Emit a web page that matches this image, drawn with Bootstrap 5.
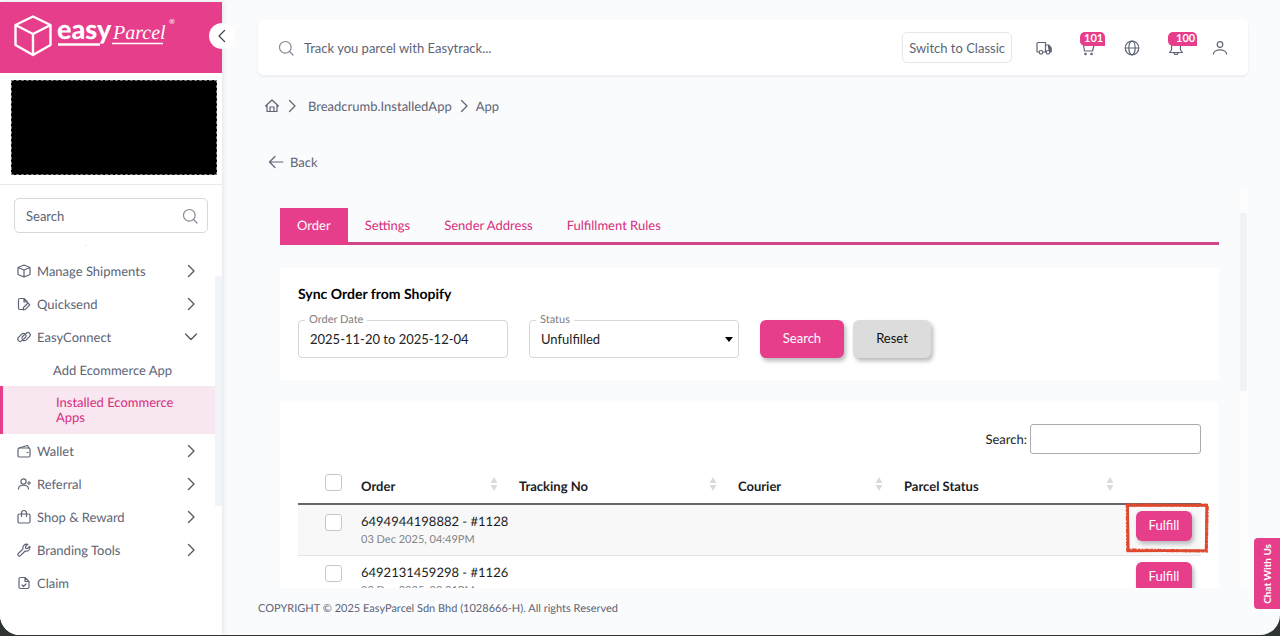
<!DOCTYPE html>
<html lang="en">
<head>
<meta charset="utf-8">
<meta name="viewport" content="width=device-width, initial-scale=1">
<title>EasyParcel - Installed Ecommerce Apps</title>
<link href="https://cdn.jsdelivr.net/npm/bootstrap@5.3.0/dist/css/bootstrap.min.css" rel="stylesheet">
<style>
:root{--pink:#e63e8b;--ink:#5d6475;--line:#d9dbdf}
body{font-family:Lato,"Liberation Sans",sans-serif;font-size:13px;line-height:16px;color:var(--ink);background:#2f3332;height:100vh;overflow:hidden;text-rendering:geometricPrecision}
a{color:inherit;text-decoration:none}
svg{display:block;flex:none}
.ico{width:16px;height:16px;fill:none;stroke:currentColor;stroke-width:1.2;stroke-linecap:round;stroke-linejoin:round}
.app-shell{height:calc(100vh - 1px);background:#fafbfd;border-radius:0 0 20px 20px;overflow:hidden;padding-top:2px}
.side{width:222px;background:#fff;box-shadow:1px 0 5px #dfe3e8;z-index:2}
.brand{background:var(--pink);height:71px;padding:12px 14px}
.collapse-btn{right:-13px;top:21px;width:26px;height:26px;background:#fff;color:#444;border:0;padding:0}
.account{height:95px;margin:7px 5px 9px 11px;background:#000;border:1px dashed #777}
.side-search{border-top:1px solid #e8eaec;padding:13px 14px 12px}
.field-box{height:35px;border:1px solid #d5d8dc;border-radius:5px;padding:0 9px 0 11px}
.bare{border:0;background:none;outline:0;padding:0;min-width:0;color:inherit}
.bare::placeholder{color:var(--ink);opacity:1}
.lens{color:#858b96}
.side-nav{overflow:hidden;margin-bottom:22px}
.side-list{margin-top:-24px;width:215px}
.side-list a{display:flex;align-items:center;height:33px;padding:0 16px 0 16px}
.side-list a .ico:first-child{margin-right:5px}
.side-list .chev{margin-left:auto;stroke-width:1.4;color:#555b66}
.side-list .sub{padding-left:53px}
.side-list .on{height:48px;line-height:15px;padding:0 30px 0 53px;border-left:3px solid var(--pink);background:#f8e6f1;color:#d62f7d}
.thumb{width:7px;background:#f0f4f7}
.side .thumb{right:0;top:274px;height:230px}
.topbar{height:55px;margin:18px 32px 0 36px;padding:0 20px;background:#fff;border-radius:5px;box-shadow:0 2px 3px #eaecef}
.topbar .lens{margin-right:10px}
.classic{border:1px solid #e4e6ea;border-radius:5px;height:31px;background:#fff;color:inherit;padding:0 6px}
.tool{width:16px;height:16px;margin-left:28px;color:inherit}
.count{bottom:10px;height:14px;background:var(--pink);color:#fff;font-weight:700;font-size:11px;line-height:14px;border-radius:5px 5px 0 5px;padding:0 2px 0 4px}
.crumbs{margin:23px 0 0 42px;height:16px}
.back{margin:40px 0 0 46px;height:16px;gap:6px}
.scroller{margin:18px 32px 0 58px;overflow:hidden}
.content-col{padding-top:20px}
.rail{width:8px;margin-left:21px;background:#fdfdfe}
.rail .thumb{margin-top:25px;height:178px}
.tabs{border-bottom:3px solid #cf4788;color:#d62f7d}
.tabs a{height:34px;line-height:34px;padding:0 17px}
.tabs .current{background:var(--pink);color:#fff;border-bottom:3px solid var(--pink);height:37px;margin-bottom:-3px}
.panel{background:#fff;padding:17px 18px 0;color:#1c1d20}
.filters{margin-top:23px;height:112px}
.filters h1{font-size:14px;line-height:18px;font-weight:700;color:#000;margin:0 0 17px}
.outlined{width:210px;margin-right:21px}
.outlined label{left:7px;top:-8px;padding:0 4px;font-size:11px;background:#fff;color:#7d8083}
.outlined .ctl{width:100%;height:38px;border:1px solid #d4d6d8;border-radius:4px;padding:0 11px;font-size:13px;color:#222;background-color:#fff}
.outlined select.ctl{padding-top:2px;background-position:right 5px center;background-size:8px 5px;--bs-form-select-bg-img:url("data:image/svg+xml,%3Csvg xmlns='http://www.w3.org/2000/svg' viewBox='0 0 8 5'%3E%3Cpath d='M0 0h8L4 5z'/%3E%3C/svg%3E")}
.act{border:0;border-radius:6px;color:#fff;background:var(--pink);box-shadow:2px 3px 4px #b9b9bd;padding:0 0 2px}
.wide{width:84px;height:38px;margin-right:9px}
.grey{background:#dcdcdc;color:#111;width:78px}
.orders{margin-top:22px;padding-top:22px}
.orders .find{height:30px;width:171px;border:1px solid #a9abad;border-radius:3px;margin-left:3px}
.grid{width:100%;table-layout:fixed;margin-top:12px;color:#1b1c1e}
.grid th{height:38px;font-weight:700;padding:2px 10px 0;border-bottom:2px solid #666}
.grid td{height:51px;vertical-align:top;padding:8px 10px 0;border-bottom:1px solid #e3e3e3;white-space:nowrap}
.grid th:first-child,.grid td:first-child{padding-left:27px}
.grid th:first-child{padding-top:0;padding-bottom:4px}
.grid td:last-child{padding:6px 0 0 11px}
.grid tbody tr:nth-child(odd){background:#f8f8f8}
.c1{width:53px}.c2{width:158px}.c4{width:166px}.c5{width:231px}.c6{width:76px}
.grid input{width:17px;height:17px;margin:0;border:1px solid #c4c6c9;border-radius:3px;display:block;background-color:#fff}
.grid td input{margin-top:1px}
.grid small{display:block;font-size:11px;line-height:15px;margin-top:3px;color:#828487}
.sorter{width:8px;height:16px;fill:#d9dadc;margin:-2px 1px 0 0}
.ship{width:56px;height:30px}
.outline-mark{left:-1px;top:-3px;width:86px;height:52px;pointer-events:none;fill:none}
.foot{height:47px;padding:13px 0 0 36px;font-size:11px}
.chat{right:0;bottom:26px;width:26px;height:71px;border:0;border-radius:4px 0 0 4px;background:var(--pink);color:#fff;font-size:10px;font-weight:700;z-index:3}
.chat span{writing-mode:vertical-rl;transform:rotate(180deg);white-space:nowrap}
</style>
</head>
<body>
<svg width="0" height="0" class="position-absolute">
<symbol id="right" viewBox="0 0 16 16"><path d="m5.500 2.500 5.500 5.500-5.500 5.500"/></symbol>
<symbol id="find" viewBox="0 0 16 16"><circle cx="7.300" cy="7.300" r="5.800"/><path d="m11.500 11.500 3.500 3.500"/></symbol>
</svg>
<div class="app-shell d-flex position-relative">
<aside class="side d-flex flex-column flex-shrink-0 position-relative">
  <div class="brand">
    <svg width="164" height="46" viewBox="0 0 164 46" role="img" aria-label="easyParcel" fill="none" stroke="#fff">
      <path d="M19 2.500 36.500 11v20L19 41 1.500 31V11zM1.500 11 19 20l17.500-9M19 20v21" stroke-width="2.400" stroke-linejoin="round"/>
      <text x="43" y="25" font-family="Lato" font-weight="900" font-size="27" fill="#fff" stroke="none">easy</text>
      <text x="99" y="25" font-family="Liberation Serif" font-style="italic" font-size="20" fill="#fff" stroke="none">Parcel</text>
      <text x="155" y="10" font-family="Lato" font-size="7" fill="#fff" stroke="none">®</text>
      <path d="M44 30.500h42" stroke-width="2.500"/><path d="M98 29.500h51" stroke-width="1.500"/>
    </svg>
  </div>
  <button class="collapse-btn rounded-circle position-absolute d-flex align-items-center justify-content-center" aria-label="Collapse menu"><svg class="ico" viewBox="0 0 16 16"><path d="M10.500 2.500 5 8l5.500 5.500"/></svg></button>
  <div class="account"></div>
  <div class="side-search"><div class="field-box d-flex align-items-center"><input class="bare flex-grow-1" aria-label="Search menu" placeholder="Search"><svg class="ico lens"><use href="#find"/></svg></div></div>
  <nav class="side-nav flex-grow-1">
    <div class="side-list">
      <a href="#"><svg class="ico" viewBox="0 0 16 16"><path d="M3 2h10v9.500H3z"/></svg>New Shipment<svg class="ico chev"><use href="#right"/></svg></a>
      <a href="#"><svg class="ico" viewBox="0 0 16 16"><path d="m8 2 6 2.500v7L8 14l-6-2.500v-7zM2 4.500 8 7l6-2.500M8 7v7"/></svg>Manage Shipments<svg class="ico chev"><use href="#right"/></svg></a>
      <a href="#"><svg class="ico" viewBox="0 0 16 16"><path d="M6 13.500H4a1.500 1.500 0 0 1-1.500-1.500V4A1.500 1.500 0 0 1 4 2.500h4l3.500 3.500M8 2.500V6h3.500M7.500 11.500 12 7l1.800 1.800-4.500 4.500-2.300.500z"/></svg>Quicksend<svg class="ico chev"><use href="#right"/></svg></a>
      <a href="#"><svg class="ico" viewBox="0 0 16 16"><path d="M6.500 11 5.800 11.700a2.300 2.300 0 0 1-3.300-3.300l3.500-3.500a2.500 2.500 0 0 1 3.600 3.400L7.800 10M9.500 5l.7-.7a2.300 2.300 0 0 1 3.300 3.300L10 11.100a2.500 2.500 0 0 1-3.600-3.400L8.200 6"/></svg>EasyConnect<svg class="ico chev" viewBox="0 0 16 16"><path d="m2.500 5 5.500 5.500L13.500 5"/></svg></a>
      <a href="#" class="sub">Add Ecommerce App</a>
      <a href="#" class="on">Installed Ecommerce Apps</a>
      <a href="#"><svg class="ico" viewBox="0 0 16 16"><rect x="2" y="5" width="12" height="9" rx="1.500"/><path d="M3 5 11.500 2.500 13 5M11 9.500h1"/></svg>Wallet<svg class="ico chev"><use href="#right"/></svg></a>
      <a href="#"><svg class="ico" viewBox="0 0 16 16"><circle cx="7.500" cy="5.500" r="2.600"/><path d="M2.500 13c0-5 10-5 10 0M13 5.500v3M11.500 7h3"/></svg>Referral<svg class="ico chev"><use href="#right"/></svg></a>
      <a href="#"><svg class="ico" viewBox="0 0 16 16"><rect x="2" y="5" width="12" height="9" rx="1.500"/><path d="M5.500 7.500V4a2.500 2.500 0 0 1 5 0v3.500"/></svg>Shop &amp; Reward<svg class="ico chev"><use href="#right"/></svg></a>
      <a href="#"><svg class="ico" viewBox="0 0 16 16"><path d="M11.800 2.300a3.700 3.700 0 0 0-4.800 4.500L2.300 11.500a1.500 1.500 0 0 0 2.200 2.200L9.200 9a3.700 3.700 0 0 0 4.600-4.700L11.500 6.500 9.800 6.300 9.500 4.500z"/></svg>Branding Tools<svg class="ico chev"><use href="#right"/></svg></a>
      <a href="#"><svg class="ico" viewBox="0 0 16 16"><path d="M4.500 2.500h4.500l4 4V12a1.500 1.500 0 0 1-1.500 1.500h-7A1.500 1.500 0 0 1 3 12V4a1.500 1.500 0 0 1 1.500-1.500zM9 2.500v4h4M6 10l1.500 1.500L10 9"/></svg>Claim</a>
    </div>
  </nav>
  <div class="thumb position-absolute"></div>
</aside>
<main class="flex-grow-1 d-flex flex-column" style="min-width:0">
  <header class="topbar d-flex align-items-center flex-shrink-0">
    <svg class="ico lens"><use href="#find"/></svg>
    <input class="bare flex-grow-1" aria-label="Track parcel" placeholder="Track you parcel with Easytrack...">
    <button class="classic">Switch to Classic</button>
    <a href="#" class="tool ms-4" aria-label="Shipments"><svg class="ico" viewBox="0 0 16 16"><path d="M3 12H1.500a.500.500 0 0 1-.5-.5V3.500c0-.5.500-1 1-1h7.500V12H7M10 5h3l2 3v4h-1.500"/><path d="M12.500 5.500 15 8v3.500h-2V8h-.5z" fill="currentColor"/><circle cx="5" cy="12.300" r="1.800" fill="#fff"/><circle cx="12" cy="12.300" r="1.800" fill="#fff"/></svg></a>
    <a href="#" class="tool position-relative" aria-label="Cart"><svg class="ico" viewBox="0 0 16 16"><path d="M1 2.500h2l1.500 8.500h8L14 5H3.500"/><circle cx="5.500" cy="14" r=".7" fill="currentColor"/><circle cx="11.500" cy="14" r=".7" fill="currentColor"/></svg><span class="count position-absolute start-0">101</span></a>
    <a href="#" class="tool" aria-label="Language"><svg class="ico" viewBox="0 0 16 16"><circle cx="8" cy="8" r="6.800"/><ellipse cx="8" cy="8" rx="3.200" ry="6.800"/><path d="M1.500 8h13"/></svg></a>
    <a href="#" class="tool position-relative" aria-label="Notifications"><svg class="ico" viewBox="0 0 16 16"><path d="M3.500 10V6.500a4.500 4.500 0 0 1 9 0V10l2 2.500h-13zM6 12.500a2 2 0 0 0 4 0"/></svg><span class="count position-absolute start-0 ps-2">100</span></a>
    <a href="#" class="tool" aria-label="Profile"><svg class="ico" viewBox="0 0 16 16"><circle cx="8" cy="4.500" r="2.800"/><path d="M1.500 14c0-5.500 13-5.500 13 0"/></svg></a>
  </header>
  <nav class="crumbs d-flex align-items-center flex-shrink-0" aria-label="Breadcrumb">
    <a href="#" aria-label="Home"><svg class="ico" viewBox="0 0 16 16"><path d="m1.500 8 6.500-6 6.500 6M3 7v6.500h10V7M6 13.500V9h4v4.500"/></svg></a>
    <svg class="ico ms-1"><use href="#right"/></svg><a href="#" class="ms-2 me-1">Breadcrumb.InstalledApp</a>
    <svg class="ico"><use href="#right"/></svg><span class="ms-1">App</span>
  </nav>
  <a href="#" class="back d-flex align-items-center flex-shrink-0 align-self-start"><svg class="ico" viewBox="0 0 16 16"><path d="M7 2.500 1.500 8 7 13.500M1.500 8h13.500"/></svg><span>Back</span></a>
  <div class="scroller d-flex flex-grow-1">
    <div class="content-col flex-grow-1">
      <nav class="tabs d-flex"><a href="#" class="current" aria-current="page">Order</a><a href="#">Settings</a><a href="#">Sender Address</a><a href="#">Fulfillment Rules</a></nav>
      <section class="panel filters">
        <h1>Sync Order from Shopify</h1>
        <form class="d-flex">
          <div class="outlined position-relative"><label for="range" class="position-absolute">Order Date</label><input id="range" class="ctl" value="2025-11-20 to 2025-12-04"></div>
          <div class="outlined position-relative"><label for="state" class="position-absolute">Status</label><select id="state" class="ctl form-select shadow-none"><option>Unfulfilled</option></select></div>
          <button type="button" class="act wide">Search</button><button type="reset" class="act wide grey">Reset</button>
        </form>
      </section>
      <section class="panel orders">
        <div class="d-flex align-items-center justify-content-end"><label for="q">Search:</label><input id="q" class="find" type="search"></div>
        <table class="grid">
          <colgroup><col class="c1"><col class="c2"><col><col class="c4"><col class="c5"><col class="c6"></colgroup>
          <thead><tr>
            <th><input type="checkbox" class="form-check-input" aria-label="Select all"></th>
            <th><div class="d-flex justify-content-between">Order<svg class="sorter" viewBox="0 0 8 16"><path d="M4 1 7.500 7h-7zM4 15 .5 9h7z"/></svg></div></th>
            <th><div class="d-flex justify-content-between">Tracking No<svg class="sorter" viewBox="0 0 8 16"><path d="M4 1 7.500 7h-7zM4 15 .5 9h7z"/></svg></div></th>
            <th><div class="d-flex justify-content-between">Courier<svg class="sorter" viewBox="0 0 8 16"><path d="M4 1 7.500 7h-7zM4 15 .5 9h7z"/></svg></div></th>
            <th><div class="d-flex justify-content-between">Parcel Status<svg class="sorter" viewBox="0 0 8 16"><path d="M4 1 7.500 7h-7zM4 15 .5 9h7z"/></svg></div></th>
            <th></th>
          </tr></thead>
          <tbody>
            <tr><td><input type="checkbox" class="form-check-input" aria-label="Select 1128"></td><td>6494944198882 - #1128<small>03 Dec 2025, 04:49PM</small></td><td></td><td></td><td></td>
              <td class="position-relative"><button class="act ship">Fulfill</button>
                <svg class="outline-mark position-absolute" viewBox="0 0 86 53"><path d="M3 3.500 83.500 3l-.5 46.500L3.500 50z" stroke="#d9432c" stroke-width="2.500"/><path d="M2.500 3 84 3.500 83 50 3 49z" stroke="#e04a2f" stroke-width="3.200" stroke-dasharray="3 1 5 1 2 1"/></svg></td></tr>
            <tr><td><input type="checkbox" class="form-check-input" aria-label="Select 1126"></td><td>6492131459298 - #1126<small>02 Dec 2025, 03:31PM</small></td><td></td><td></td><td></td><td><button class="act ship">Fulfill</button></td></tr>
          </tbody>
        </table>
      </section>
    </div>
    <div class="rail flex-shrink-0"><div class="thumb"></div></div>
  </div>
  <footer class="foot flex-shrink-0">COPYRIGHT © 2025 EasyParcel Sdn Bhd (1028666-H). All rights Reserved</footer>
</main>
<button class="chat position-absolute d-flex align-items-center justify-content-center"><span>Chat With Us</span></button>
</div>
<script src="https://cdn.jsdelivr.net/npm/bootstrap@5.3.0/dist/js/bootstrap.bundle.min.js"></script>
</body>
</html>
